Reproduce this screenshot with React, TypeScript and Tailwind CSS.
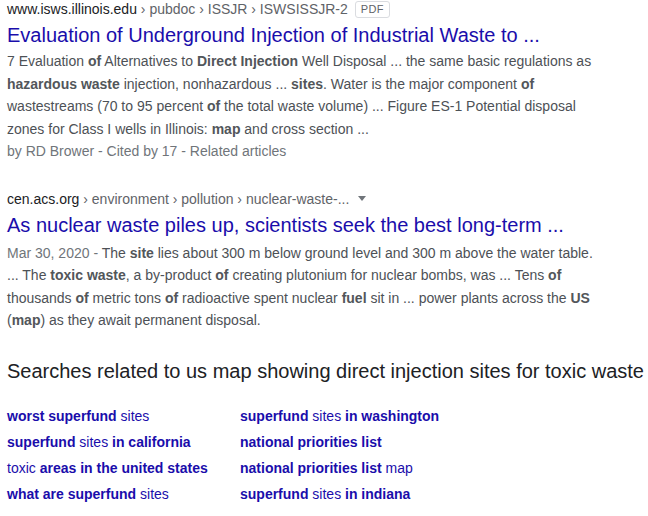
import React from 'react';

const font = { fontFamily: '"Liberation Sans", Arial, sans-serif' };

type Part = string | { b: string };

function Rich({ parts, boldClass }: { parts: Part[]; boldClass: string }) {
  return (
    <>
      {parts.map((p, i) =>
        typeof p === 'string' ? <span key={i}>{p}</span> : <b key={i} className={boldClass}>{p.b}</b>,
      )}
    </>
  );
}

const snippet1: Part[] = [
  '7 Evaluation ', { b: 'of' }, ' Alternatives to ', { b: 'Direct Injection' }, ' Well Disposal ... the same basic regulations as ',
  { b: 'hazardous waste' }, ' injection, nonhazardous ... ', { b: 'sites' }, '. Water is the major component ', { b: 'of' },
  ' wastestreams (70 to 95 percent ', { b: 'of' }, ' the total waste volume) ... Figure ES-1 Potential disposal zones for Class I wells in Illinois: ',
  { b: 'map' }, ' and cross section ...',
];

const snippet2: Part[] = [
  'The ', { b: 'site' }, ' lies about 300 m below ground level and 300 m above the water table. ... The ', { b: 'toxic waste' },
  ', a by-product ', { b: 'of' }, ' creating plutonium for nuclear bombs, was ... Tens ', { b: 'of' }, ' thousands ', { b: 'of' },
  ' metric tons ', { b: 'of' }, ' radioactive spent nuclear ', { b: 'fuel' }, ' sit in ... power plants across the ', { b: 'US' },
  ' (', { b: 'map' }, ') as they await permanent disposal.',
];

const related: Part[][] = [
  [{ b: 'worst superfund' }, ' sites'],
  [{ b: 'superfund' }, ' sites ', { b: 'in washington' }],
  [{ b: 'superfund' }, ' sites ', { b: 'in california' }],
  [{ b: 'national priorities list' }],
  ['toxic ', { b: 'areas in the united states' }],
  [{ b: 'national priorities list' }, ' map'],
  [{ b: 'what are superfund' }, ' sites'],
  [{ b: 'superfund' }, ' sites ', { b: 'in indiana' }],
];

export default function App() {
  return (
    <div className="w-[648px] h-[516px] bg-white overflow-hidden pl-[7px]" style={font}>
      {/* result 1 */}
      <div className="w-[600px]">
        <div className="flex items-center h-[18px] text-[14px] leading-[18px]">
          <span className="text-[#202124]">www.isws.illinois.edu</span>
          <span className="text-[#5f6368]">&nbsp;› pubdoc › ISSJR › ISWSISSJR-2</span>
          <span className="ml-[7px] border border-[#dadce0] rounded-[3px] px-[5px] h-[17px] leading-[15px] text-[11px] tracking-[0.4px] text-[#5f6368]">PDF</span>
        </div>
        <div className="mt-[4px] text-[20px] leading-[26px] text-[#1a0dab] no-underline">
          Evaluation of Underground Injection of Industrial Waste to ...
        </div>
        <div className="mt-[2px] text-[14px] leading-[22.5px] text-[#4d5156] w-[600px]">
          <Rich parts={snippet1} boldClass="font-bold text-[#52565a]" />
        </div>
        <div className="text-[14px] leading-[22.5px] text-[#70757a]">by RD Brower - Cited by 17 - Related articles</div>
      </div>

      {/* result 2 */}
      <div className="w-[600px] mt-[27px]">
        <div className="flex items-center h-[18px] text-[14px] leading-[18px]">
          <span className="text-[#202124]">cen.acs.org</span>
          <span className="text-[#5f6368]">&nbsp;› environment › pollution › nuclear-waste-...</span>
          <svg className="ml-[9px]" width="8" height="5" viewBox="0 0 8 5">
            <path d="M0 0h8L4 5z" fill="#70757a" />
          </svg>
        </div>
        <div className="mt-[4px] text-[20px] leading-[26px] text-[#1a0dab] no-underline">
          As nuclear waste piles up, scientists seek the best long-term ...
        </div>
        <div className="mt-[4px] text-[14px] leading-[22.5px] text-[#4d5156] w-[600px]">
          <span className="text-[#70757a]">Mar 30, 2020 - </span>
          <Rich parts={snippet2} boldClass="font-bold text-[#52565a]" />
        </div>
      </div>

      {/* related searches */}
      <div className="mt-[26px] text-[20px] leading-[26px] text-[#202124] whitespace-nowrap">
        Searches related to us map showing direct injection sites for toxic waste
      </div>
      <div className="mt-[19px] grid grid-cols-[233px_auto] text-[14px] leading-[26px] text-[#1a0dab]">
        {related.map((r, i) => (
          <a key={i} className="whitespace-nowrap">
            <Rich parts={r} boldClass="font-bold" />
          </a>
        ))}
      </div>
    </div>
  );
}
